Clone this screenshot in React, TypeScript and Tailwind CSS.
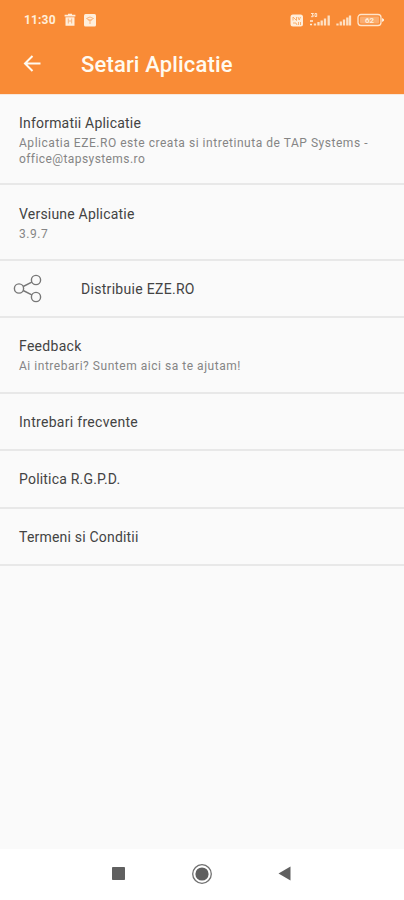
import React from 'react';

function StatusBar() {
  return (
    <div className="flex h-10 items-center pl-6 pr-5 text-[#ffeedb]">
      <span className="w-[33px] whitespace-nowrap text-[12px] font-bold leading-none tracking-[0.15px]">11:30</span>
      <svg className="ml-[7px]" width="12" height="14" viewBox="0 0 12 14">
        <path d="M4 .7h4v1.1h3.4v1.7H.6V1.800H4zM1.500 4.200h9v8.600h-9z" fill="currentColor" />
        <path d="M4.300 5.500v5M7.700 5.500v5M4.300 8h3.400" stroke="#fbb47c" strokeWidth="1" fill="none" />
      </svg>
      <svg className="ml-2" width="12" height="13" viewBox="0 0 12 13">
        <rect width="12" height="12.500" rx="1.500" fill="currentColor" />
        <path d="M2.500 4.500Q6 1.500 9.500 4.500L6 6.500zM6 6v4M4 6h4" stroke="#fbb47c" strokeWidth="1" fill="none" />
      </svg>
      <div className="flex-1" />
      <svg width="94" height="16" viewBox="0 0 94 16" fill="none">
        <rect x=".5" y="2.500" width="12.500" height="12" rx="2.500" fill="currentColor" />
        <path d="M3 5v3.500M3 5l3.500 3.500V5M8 5l1.200 3L10.500 5M3 11h3l1 2M8.500 10v3M10.500 10v3" stroke="#faa761" strokeWidth=".9" />
        <path d="M21 1.500h2.500L22 3.200h1.200v1.500H21M25 1.500h1.700v3H25z" stroke="currentColor" strokeWidth=".9" />
        <path d="M20 9h3M20 12.500h2" stroke="currentColor" strokeWidth="1.300" />
        <path d="M25 13.500v-2M28.500 13.500v-3.500M31.700 13.500v-5M35 13.500v-7M38.700 13.500v-10M47.500 13.500v-2M50.800 13.500v-4M54 13.500v-6M57.300 13.500v-8M60 13.500v-10" stroke="currentColor" strokeOpacity=".85" strokeWidth="2.300" />
        <rect x="68" y="2.500" width="23" height="11" rx="3" stroke="currentColor" strokeOpacity=".9" strokeWidth="1.300" />
        <rect x="70" y="4.500" width="19" height="7" rx="1" fill="currentColor" fillOpacity=".35" />
        <path d="M92 6v4l2-1.200V7.200z" fill="currentColor" />
        <text x="79.500" y="11" textAnchor="middle" className="font-['Roboto',sans-serif] text-[8px] font-bold" fill="currentColor">62</text>
      </svg>
    </div>
  );
}

function Header() {
  return (
    <header className="h-[94px] shrink-0 bg-[#f98b36]">
      <StatusBar />
      <div className="flex h-12 items-center pl-[23px] text-[#fffaf0]">
        <svg width="18" height="18" viewBox="0 0 18 18" fill="none" stroke="currentColor" strokeWidth="2">
          <path d="M17.500 8.500H1.800M9.500 1L2 8.500 9.500 16" />
        </svg>
        <h1 className="ml-[40px] mt-[2px] whitespace-nowrap text-[22px] font-medium leading-none tracking-[0.15px]">Setari Aplicatie</h1>
      </div>
    </header>
  );
}

const titleStyle = 'whitespace-nowrap text-[14px] leading-[18px] text-[#434343]';
const detailStyle = 'mt-[3px] whitespace-nowrap text-[12px] leading-4 text-[#858585] tracking-[0.53px]';
const rowStyle = 'flex flex-col justify-center border-b-2 border-[#e8e8e8] pl-[19px]';

export default function App() {
  return (
    <div className="flex h-[900px] w-[404px] flex-col overflow-hidden bg-[#fafafa] font-['Roboto',sans-serif]">
      <Header />
      <main className="flex-1 border-t border-[#f8e8dc]">
        <section className={`${rowStyle} h-[90px] pt-[3px]`}>
          <h2 className={`${titleStyle} tracking-[0.2px]`}>Informatii Aplicatie</h2>
          <p className={detailStyle}>
            Aplicatia EZE.RO este creata si intretinuta de TAP Systems -
            <br />
            <span className="tracking-[0.42px]">office@tapsystems.ro</span>
          </p>
        </section>
        <section className={`${rowStyle} h-[76px] pt-[2px]`}>
          <h2 className={`${titleStyle} tracking-[0.2px]`}>Versiune Aplicatie</h2>
          <p className={detailStyle}>3.9.7</p>
        </section>
        <section className="flex h-[57px] items-center border-b-2 border-[#e8e8e8] pl-[13px]">
          <svg width="30" height="30" viewBox="0 0 30 30" fill="none" stroke="#777" strokeWidth="1.400">
            <circle cx="6" cy="14.500" r="4.600" />
            <circle cx="23" cy="6" r="4.600" />
            <circle cx="23" cy="23" r="4.600" />
            <path d="M10.200 12.500l8.600-4.300M10.200 16.500l8.600 4.300" />
          </svg>
          <h2 className={`${titleStyle} ml-[38px] tracking-[0.3px]`}>Distribuie EZE.RO</h2>
        </section>
        <section className={`${rowStyle} h-[76px] pt-px`}>
          <h2 className={`${titleStyle} tracking-[0.3px]`}>Feedback</h2>
          <p className={detailStyle}>Ai intrebari? Suntem aici sa te ajutam!</p>
        </section>
        <section className={`${rowStyle} h-[57px]`}>
          <h2 className={`${titleStyle} tracking-[0.3px]`}>Intrebari frecvente</h2>
        </section>
        <section className={`${rowStyle} h-[58px]`}>
          <h2 className={`${titleStyle} tracking-[0.2px]`}>Politica R.G.P.D.</h2>
        </section>
        <section className={`${rowStyle} h-[57px]`}>
          <h2 className={`${titleStyle} tracking-[0.2px]`}>Termeni si Conditii</h2>
        </section>
      </main>
      <nav className="flex h-[51px] shrink-0 items-center justify-between bg-white pb-[2px] pl-28 pr-[113px]">
        <svg width="13" height="13" viewBox="0 0 13 13"><rect width="13" height="13" rx=".8" fill="#606060" /></svg>
        <svg width="22" height="22" viewBox="0 0 22 22">
          <circle cx="11" cy="11" r="9.300" fill="none" stroke="#707070" strokeWidth="1.300" />
          <circle cx="11" cy="11" r="6.600" fill="#606060" />
        </svg>
        <svg width="13" height="15" viewBox="0 0 13 15"><path d="M12.500.5v14L.5 7.500z" fill="#606060" /></svg>
      </nav>
    </div>
  );
}
